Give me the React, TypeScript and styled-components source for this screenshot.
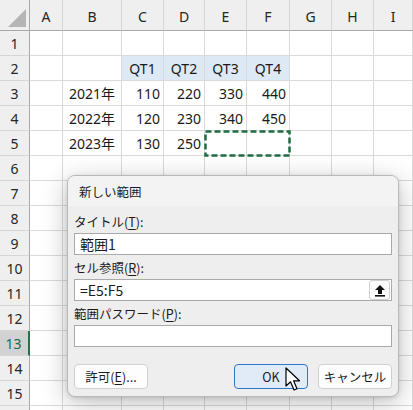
import * as React from "react";
import styled, { createGlobalStyle } from "styled-components";

const GlobalStyle = createGlobalStyle`
  html, body {
    margin: 0;
    padding: 0;
    background: #ffffff;
    overflow: hidden;
  }
  body {
    font-family: "Noto Sans", "Noto Sans CJK JP", sans-serif;
  }
`;

const Sheet = styled.div`
  position: relative;
  width: 413px;
  height: 410px;
  overflow: hidden;
  background: #ffffff;
`;

const Grid = styled.div`
  display: grid;
  grid-template-columns: 30px 33px 59px 42px 41px 42px 43px 42px 42px 1fr;
  grid-template-rows: 31px repeat(16, 25px);
`;

const Corner = styled.div`
  background: #efefef;
  border-right: 1px solid #a9a9a9;
  border-bottom: 1px solid #a9a9a9;
  box-sizing: border-box;
  display: flex;
  align-items: flex-end;
  justify-content: flex-end;
  padding: 0 3px 3px 0;
`;

const ColHead = styled.div`
  background: #efefef;
  border-right: 1px solid #d6d6d6;
  border-bottom: 1px solid #a9a9a9;
  box-sizing: border-box;
  display: flex;
  align-items: center;
  justify-content: center;
  font-size: 14px;
  color: #262626;
  padding-top: 3px;
`;

const RowHead = styled.div<{ $selected?: boolean }>`
  background: ${(p) => (p.$selected ? "#d2d2d2" : "#efefef")};
  border-right: ${(p) => (p.$selected ? "2px solid #217346" : "1px solid #a9a9a9")};
  border-bottom: 1px solid #d6d6d6;
  box-sizing: border-box;
  display: flex;
  align-items: center;
  justify-content: center;
  font-size: 14px;
  color: ${(p) => (p.$selected ? "#1b6b47" : "#262626")};
  padding-right: ${(p) => (p.$selected ? "1px" : "0")};
`;

const Cell = styled.div<{ $align?: "left" | "center" | "right"; $fill?: string }>`
  background: ${(p) => p.$fill || "#ffffff"};
  border-right: 1px solid #dadada;
  border-bottom: 1px solid #dadada;
  box-sizing: border-box;
  display: flex;
  align-items: center;
  justify-content: ${(p) =>
    p.$align === "right" ? "flex-end" : p.$align === "center" ? "center" : "flex-start"};
  padding: 0 3px;
  font-size: 14px;
  color: #1a1a1a;
  white-space: nowrap;
  overflow: hidden;
`;

const Marquee = styled.svg`
  position: absolute;
  left: 204px;
  top: 130px;
  width: 87px;
  height: 27px;
`;

const Dialog = styled.div`
  position: absolute;
  left: 67px;
  top: 175px;
  width: 332px;
  height: 222px;
  box-sizing: border-box;
  background: #eeeeee;
  border: 1px solid #b9b9b9;
  border-radius: 8px;
  box-shadow: 0 6px 26px rgba(0, 0, 0, 0.25), 0 1px 4px rgba(0, 0, 0, 0.12);
  overflow: hidden;
  display: flex;
  flex-direction: column;
  font-family: "Noto Sans CJK JP", "Noto Sans", sans-serif;
`;

const TitleBar = styled.div`
  height: 29px;
  background: #f3f3f3;
  display: flex;
  align-items: center;
  padding: 1px 0 0 11px;
  font-size: 12.5px;
  color: #1b1b1b;
`;

const Body = styled.div`
  display: flex;
  flex-direction: column;
  padding: 3px 6px 0 6px;
`;

const Label = styled.div`
  height: 24px;
  display: flex;
  align-items: center;
  font-size: 12.5px;
  color: #1b1b1b;
  u {
    text-underline-offset: 2px;
  }
`;

const Field = styled.div`
  height: 22px;
  box-sizing: border-box;
  border: 1px solid #aaaaaa;
  background: #ffffff;
  display: flex;
  align-items: center;
  padding: 0 4px 0 5px;
  font-size: 14px;
  color: #1a1a1a;
`;

const FieldText = styled.span`
  flex: 1;
`;

const PickButton = styled.div`
  width: 21px;
  height: 20px;
  margin-right: -3px;
  box-sizing: border-box;
  border: 1px solid #cfcfcf;
  border-radius: 3px;
  background: #fbfbfb;
  display: flex;
  align-items: center;
  justify-content: center;
`;

const Buttons = styled.div`
  display: flex;
  align-items: center;
  margin-top: 17px;
  gap: 10px;
`;

const Spacer = styled.div`
  flex: 1;
`;

const Button = styled.div<{ $primary?: boolean }>`
  width: 74px;
  height: 25px;
  box-sizing: border-box;
  border-radius: 4px;
  border: 1px solid ${(p) => (p.$primary ? "#2a78c8" : "#d0d0d0")};
  background: ${(p) => (p.$primary ? "#e0ebf7" : "#fdfdfd")};
  display: flex;
  align-items: center;
  justify-content: center;
  font-size: 12.5px;
  color: #1b1b1b;
  u {
    text-underline-offset: 2px;
  }
`;

const Cursor = styled.svg`
  position: absolute;
  left: 285px;
  top: 367px;
  width: 17px;
  height: 26px;
`;

const cols = ["A", "B", "C", "D", "E", "F", "G", "H", "I"];

type CellData = { text?: string; align?: "left" | "center" | "right"; fill?: string };

const blue = "#dde9f5";

const data: Record<number, CellData[]> = {
  2: [
    {},
    {},
    { text: "QT1", align: "center", fill: blue },
    { text: "QT2", align: "center", fill: blue },
    { text: "QT3", align: "center", fill: blue },
    { text: "QT4", align: "center", fill: blue },
  ],
  3: [
    {},
    { text: "2021年", align: "center" },
    { text: "110", align: "right" },
    { text: "220", align: "right" },
    { text: "330", align: "right" },
    { text: "440", align: "right" },
  ],
  4: [
    {},
    { text: "2022年", align: "center" },
    { text: "120", align: "right" },
    { text: "230", align: "right" },
    { text: "340", align: "right" },
    { text: "450", align: "right" },
  ],
  5: [
    {},
    { text: "2023年", align: "center" },
    { text: "130", align: "right" },
    { text: "250", align: "right" },
  ],
};

const App = () => {
  const rows = Array.from({ length: 16 }, (_, i) => i + 1);

  return (
    <Sheet>
      <GlobalStyle />
      <Grid>
        <Corner>
          <svg width="18" height="18" viewBox="0 0 18 18">
            <polygon points="18,0 18,18 0,18" fill="#b5b5b5" />
          </svg>
        </Corner>
        {cols.map((c) => (
          <ColHead key={c}>{c}</ColHead>
        ))}
        {rows.map((r) => (
          <React.Fragment key={r}>
            {/* row 16 only peeks in at the bottom edge, its number is off-screen */}
            <RowHead $selected={r === 13}>{r < 16 ? r : null}</RowHead>
            {cols.map((c, i) => {
              const d = (data[r] && data[r][i]) || {};
              return (
                <Cell key={c} $align={d.align} $fill={d.fill}>
                  {d.text}
                </Cell>
              );
            })}
          </React.Fragment>
        ))}
      </Grid>

      <Marquee viewBox="0 0 87 27">
        <rect
          x="1.5"
          y="1.5"
          width="84"
          height="24"
          fill="none"
          stroke="#1e6e42"
          strokeWidth="2.5"
          strokeDasharray="6 3"
        />
      </Marquee>

      <Dialog>
        <TitleBar>新しい範囲</TitleBar>
        <Body>
          <Label>
            タイトル(<u>T</u>):
          </Label>
          <Field>
            <FieldText>範囲1</FieldText>
          </Field>
          <Label>
            セル参照(<u>R</u>):
          </Label>
          <Field>
            <FieldText>=E5:F5</FieldText>
            <PickButton>
              <svg width="12" height="13" viewBox="0 0 12 13">
                <polygon points="6,1 11,6 8,6 8,10 4,10 4,6 1,6" fill="#111" />
                <rect x="1" y="11" width="10" height="1.6" fill="#111" />
              </svg>
            </PickButton>
          </Field>
          <Label>
            範囲パスワード(<u>P</u>):
          </Label>
          <Field />
          <Buttons>
            <Button>
              許可(<u>E</u>)...
            </Button>
            <Spacer />
            <Button $primary>OK</Button>
            <Button>キャンセル</Button>
          </Buttons>
        </Body>
      </Dialog>

      <Cursor viewBox="0 0 17 26">
        <path
          d="M1 1 L1 19 L5.5 14.8 L9 23 L12 21.7 L8.6 13.8 L14.5 13.8 Z"
          fill="#ffffff"
          stroke="#000000"
          strokeWidth="1.2"
          strokeLinejoin="round"
        />
      </Cursor>
    </Sheet>
  );
};

export default App;
